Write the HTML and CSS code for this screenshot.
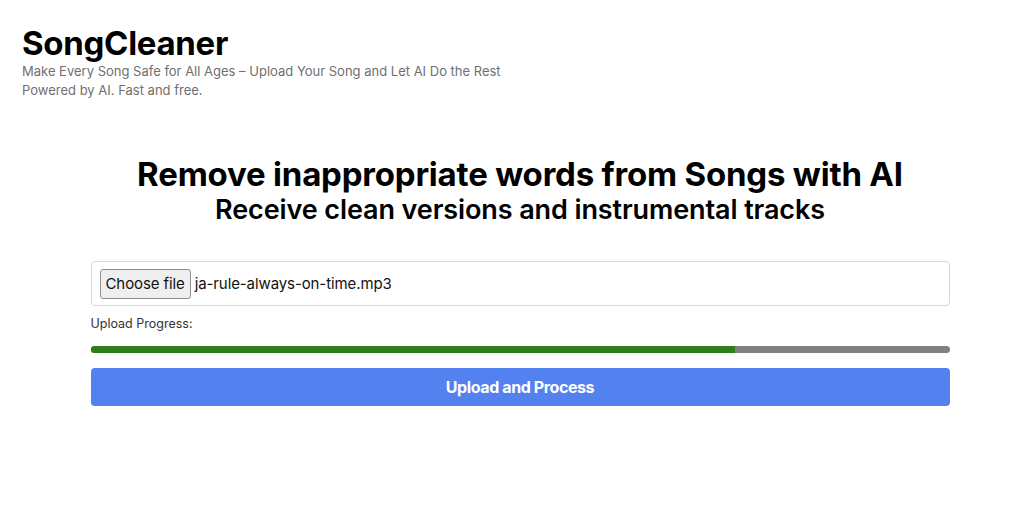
FILE: index.html
```html
<!DOCTYPE html>
<html>
<head>
<meta charset="utf-8">
<link rel="stylesheet" href="styles.css">
</head>
<body>
<header class="site-header">
  <h1 class="brand">SongCleaner</h1>
  <p class="tagline">Make Every Song Safe for All Ages – Upload Your Song and Let AI Do the Rest</p>
  <p class="tagline">Powered by AI. Fast and free.</p>
</header>
<main class="main">
  <h2 class="headline">Remove inappropriate words from Songs with AI</h2>
  <h3 class="subheadline">Receive clean versions and instrumental tracks</h3>
  <form class="upload">
    <div class="file-box">
      <span class="file-btn">Choose file</span>
      <span class="file-name">ja-rule-always-on-time.mp3</span>
    </div>
    <div class="progress-label">Upload Progress:</div>
    <div class="progress"><div class="progress-fill" style="width:75%"></div></div>
    <button type="button" class="submit">Upload and Process</button>
  </form>
</main>
</body>
</html>
```
FILE: styles.css
```css
* { box-sizing: border-box; }
body {
  margin: 0;
  background: #fff;
  font-family: Inter, "Noto Sans", sans-serif;
  color: #000;
}
.site-header {
  padding: 24px 22px 0;
}
.brand {
  margin: 0;
  font-size: 33px;
  line-height: 38px;
  font-weight: 700;
  letter-spacing: -0.3px;
}
.tagline {
  margin: 0;
  font-size: 13px;
  line-height: 19px;
  color: #707070;
}
.main {
  padding-top: 54px;
  padding-left: 16px;
  display: flex;
  flex-direction: column;
  align-items: center;
}
.headline {
  margin: 0;
  font-size: 33px;
  line-height: 40px;
  font-weight: 700;
  letter-spacing: -0.2px;
}
.subheadline {
  margin: 0;
  font-size: 27px;
  line-height: 32px;
  font-weight: 600;
  letter-spacing: -0.1px;
}
.upload {
  width: 859px;
  margin-top: 35px;
  display: flex;
  flex-direction: column;
}
.file-box {
  height: 45px;
  border: 1px solid #d6d6d6;
  border-radius: 4px;
  display: flex;
  align-items: center;
  padding: 0 8px;
  gap: 4px;
}
.file-btn {
  height: 30px;
  padding: 0 5px;
  display: flex;
  align-items: center;
  font-size: 15px;
  letter-spacing: -0.1px;
  color: #111;
  background: #efefef;
  border: 1px solid #8f8f8f;
  border-radius: 3px;
}
.file-name {
  font-size: 15px;
  letter-spacing: -0.1px;
  color: #111;
}
.progress-label {
  margin-top: 10px;
  font-size: 12.5px;
  line-height: 16px;
  color: #333;
}
.progress {
  margin-top: 14px;
  height: 7px;
  border-radius: 4px;
  background: #808080;
  overflow: hidden;
}
.progress-fill {
  height: 100%;
  background: #2e7d17;
}
.submit {
  margin-top: 15px;
  height: 38px;
  border: none;
  border-radius: 4px;
  background: #5381ef;
  color: #fff;
  font-family: Inter, "Noto Sans", sans-serif;
  font-size: 16px;
  font-weight: 700;
  letter-spacing: -0.4px;
}
```
